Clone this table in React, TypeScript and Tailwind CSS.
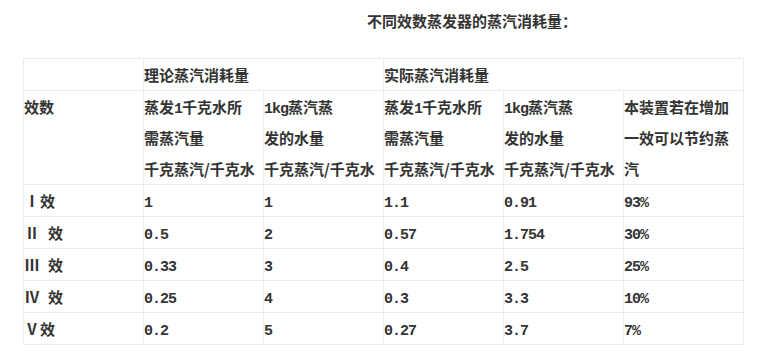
const cjk = { fontFamily: '"Noto Sans CJK SC", "Noto Sans CJK JP", sans-serif' };

const rows = [
  { num: "Ⅰ", gap: false, v: ["1", "1", "1.1", "0.91", "93%"] },
  { num: "Ⅱ", gap: true, v: ["0.5", "2", "0.57", "1.754", "30%"] },
  { num: "Ⅲ", gap: true, v: ["0.33", "3", "0.4", "2.5", "25%"] },
  { num: "Ⅳ", gap: true, v: ["0.25", "4", "0.3", "3.3", "10%"] },
  { num: "Ⅴ", gap: false, v: ["0.2", "5", "0.27", "3.7", "7%"] },
];

function Num({ children }: { children: string }) {
  return (
    <span
      className="text-[15px] leading-none tracking-[-1px]"
      style={{ fontFamily: '"Liberation Mono", monospace' }}
    >
      {children}
    </span>
  );
}

export default function App() {
  const cell = "border border-[#ebebeb] p-0 align-top text-left";
  return (
    <div className="h-[363px] w-[769px] bg-white font-bold text-[15px] leading-[31px] text-[#333]" style={cjk}>
      <div className="pl-[367px] pt-[5px]">不同效数蒸发器的蒸汽消耗量：</div>
      <table className="ml-[23px] mt-[22px] w-[721px] table-fixed border-collapse">
        <colgroup>
          <col className="w-[120px]" />
          <col className="w-[120px]" />
          <col className="w-[120px]" />
          <col className="w-[120px]" />
          <col className="w-[120px]" />
          <col className="w-[120px]" />
        </colgroup>
        <tbody>
          <tr>
            <td className={cell}></td>
            <td className={cell} colSpan={2}>理论蒸汽消耗量</td>
            <td className={cell} colSpan={3}>实际蒸汽消耗量</td>
          </tr>
          <tr>
            <td className={cell}>效数</td>
            <td className={cell}>
              蒸发<Num>1</Num>千克水所<br />需蒸汽量<br />千克蒸汽/千克水
            </td>
            <td className={cell}>
              <Num>1kg</Num>蒸汽蒸<br />发的水量<br />千克蒸汽/千克水
            </td>
            <td className={cell}>
              蒸发<Num>1</Num>千克水所<br />需蒸汽量<br />千克蒸汽/千克水
            </td>
            <td className={cell}>
              <Num>1kg</Num>蒸汽蒸<br />发的水量<br />千克蒸汽/千克水
            </td>
            <td className={cell}>本装置若在增加一效可以节约蒸汽</td>
          </tr>
          {rows.map((r) => (
            <tr key={r.num}>
              <td className={`${cell} whitespace-nowrap`}>
                <span className="inline-block w-[16px] text-center">{r.num}</span>
                {r.gap && <span className="inline-block w-[8px]"> </span>}
                效
              </td>
              {r.v.map((x, i) => (
                <td key={i} className={cell}>
                  <Num>{x}</Num>
                </td>
              ))}
            </tr>
          ))}
        </tbody>
      </table>
    </div>
  );
}
